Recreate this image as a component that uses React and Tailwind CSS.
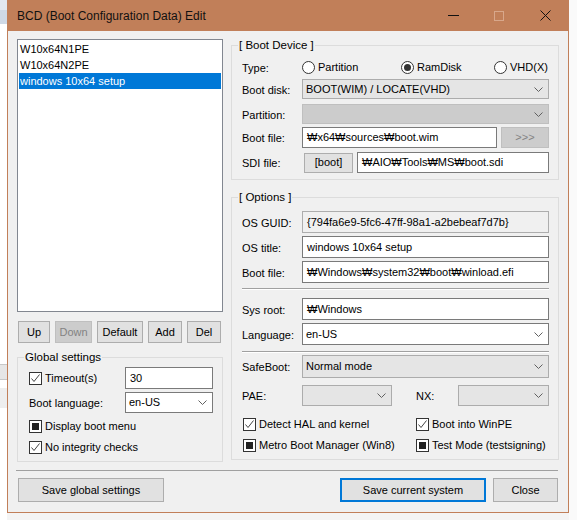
import React from "react";

const FONT = "font-['Liberation_Sans','Noto_Sans',sans-serif]";

function Chevron() {
  return (
    <svg width="9" height="5" viewBox="0 0 9 5" className="shrink-0">
      <path d="M0.5 0.5 L4.5 4.5 L8.5 0.5" fill="none" stroke="#606060" strokeWidth="1" />
    </svg>
  );
}

function Check({ state, label }) {
  return (
    <div className="flex items-center gap-[3px] whitespace-nowrap">
      <div className="w-[13px] h-[13px] border border-[#333] bg-white flex items-center justify-center shrink-0">
        {state === "on" && (
          <svg width="11" height="11" viewBox="0 0 11 11">
            <path d="M1.5 5.5 L4 8.5 L9.5 1.5" fill="none" stroke="#444" strokeWidth="1" />
          </svg>
        )}
        {state === "mixed" && <div className="w-[7px] h-[7px] bg-[#222]" />}
      </div>
      <span>{label}</span>
    </div>
  );
}

function Radio({ on, label, w }) {
  return (
    <div className={`flex items-center gap-[3px] whitespace-nowrap ${w}`}>
      <div className="w-[13px] h-[13px] rounded-full border border-[#333] bg-white flex items-center justify-center shrink-0">
        {on && <div className="w-[7px] h-[7px] rounded-full bg-[#333]" />}
      </div>
      <span>{label}</span>
    </div>
  );
}

function Select({ value, kind = "gray", className = "" }) {
  const look =
    kind === "white"
      ? "bg-white border-[#7a7a7a]"
      : kind === "off"
      ? "bg-[#cccccc] border-[#bfbfbf]"
      : "bg-[#e5e5e5] border-[#acacac]";
  return (
    <div className={`flex items-center justify-between border pl-[3px] pr-[5px] ${look} ${className}`}>
      <span className="whitespace-nowrap">{value}</span>
      <Chevron />
    </div>
  );
}

function Field({ value, className = "", ro }) {
  return (
    <div
      className={`flex items-center border pl-[4px] whitespace-nowrap ${
        ro ? "bg-[#f0f0f0] border-[#adadad]" : "bg-white border-[#7a7a7a]"
      } ${className}`}
    >
      {value}
    </div>
  );
}

function Btn({ children, className = "", off, focus }) {
  return (
    <div
      className={`flex items-center justify-center ${
        off
          ? "bg-[#cccccc] border border-[#bfbfbf] text-[#838383]"
          : focus
          ? "bg-[#e1e1e1] border-2 border-[#0078d7]"
          : "bg-[#e1e1e1] border border-[#adadad]"
      } ${className}`}
    >
      {children}
    </div>
  );
}

function Row({ label, children, className = "" }) {
  return (
    <div className={`flex items-center ${className}`}>
      <div className="w-[70px] pl-[10px] pt-[2px] whitespace-nowrap">{label}</div>
      {children}
    </div>
  );
}

function Group({ title, className = "", children }) {
  return (
    <fieldset className={`border border-[#dcdcdc] ${className}`}>
      <legend className="ml-[6px] px-[1px] h-[14px] leading-[14px] text-[11.5px]">{title}</legend>
      {children}
    </fieldset>
  );
}

export default function App() {
  return (
    <div className={`w-[577px] h-[520px] bg-white flex overflow-hidden text-[11px] text-black ${FONT}`}>
      {/* window behind */}
      <div className="w-[7px] flex flex-col bg-white">
        <div className="h-[10px] bg-[#e3e8ef]" />
        <div className="h-[14px] bg-[#cfd9e6]" />
        <div className="h-[340px]" />
        <div className="h-[16px] bg-[#e6e6e6] border-y border-[#c8c8c8]" />
        <div className="h-[8px]" />
        <div className="h-[20px] bg-[#eeeeee]" />
      </div>

      <div className="flex flex-col">
        <div className="w-[562px] h-[513px] bg-[#c17f59] flex flex-col px-px pb-px">
          {/* title bar */}
          <div className="h-[31px] flex items-center shrink-0">
            <div className="pl-[9px] flex-1 text-[12px] text-[#111]">BCD (Boot Configuration Data) Edit</div>
            <div className="w-[46px] h-full flex items-center justify-center">
              <div className="w-[11px] h-px bg-[#111]" />
            </div>
            <div className="w-[46px] h-full flex items-center justify-center">
              <div className="w-[10px] h-[10px] border border-[#d8a78b]" />
            </div>
            <div className="w-[46px] h-full flex items-center justify-center">
              <svg width="11" height="11" viewBox="0 0 11 11">
                <path d="M0.5 0.5 L10.5 10.5 M10.5 0.5 L0.5 10.5" stroke="#111" strokeWidth="1" />
              </svg>
            </div>
          </div>

          {/* body */}
          <div className="flex-1 bg-[#f0f0f0] flex flex-col">
            <div className="h-[431px] flex pl-[9px] gap-[8px]">
              {/* left column */}
              <div className="w-[206px] pt-[8px] flex flex-col">
                <div className="h-[273px] border border-[#828790] bg-white p-px">
                  <div className="h-[16px] pl-px flex items-center">W10x64N1PE</div>
                  <div className="h-[16px] pl-px flex items-center">W10x64N2PE</div>
                  <div className="h-[16px] pl-px flex items-center bg-[#0078d7] text-white">windows 10x64 setup</div>
                </div>
                <div className="mt-[9px] h-[22px] flex gap-[5px] pl-px">
                  <Btn className="w-[32px]">Up</Btn>
                  <Btn off className="w-[37px]">Down</Btn>
                  <Btn className="w-[46px]">Default</Btn>
                  <Btn className="w-[34px]">Add</Btn>
                  <Btn className="w-[34px]">Del</Btn>
                </div>
                <Group title="Global settings" className="mt-[7px] pb-[6px]">
                  <div className="mt-[3px] h-[22px] flex items-center">
                    <div className="w-[107px] pl-[11px]">
                      <Check state="on" label="Timeout(s)" />
                    </div>
                    <Field value="30" className="w-[88px] h-full" />
                  </div>
                  <div className="mt-[3px] h-[21px] flex items-center">
                    <div className="w-[107px] pl-[11px] pt-[2px]">Boot language:</div>
                    <Select value="en-US" kind="white" className="w-[88px] h-full" />
                  </div>
                  <div className="mt-[5px] h-[16px] flex items-center pl-[11px]">
                    <Check state="mixed" label="Display boot menu" />
                  </div>
                  <div className="mt-[5px] h-[16px] flex items-center pl-[11px]">
                    <Check state="on" label="No integrity checks" />
                  </div>
                </Group>
              </div>

              {/* right column */}
              <div className="w-[328px] pt-[7px] flex flex-col">
                <Group title="[ Boot Device ]" className="pb-[6px]">
                  <Row label="Type:" className="mt-[7px] h-[16px]">
                    <Radio label="Partition" w="w-[99px]" />
                    <Radio on label="RamDisk" w="w-[93px]" />
                    <Radio label="VHD(X)" w="" />
                  </Row>
                  <Row label="Boot disk:" className="mt-[4px] h-[20px]">
                    <Select value="BOOT(WIM) / LOCATE(VHD)" className="w-[247px] h-full" />
                  </Row>
                  <Row label="Partition:" className="mt-[5px] h-[20px]">
                    <Select value="" kind="off" className="w-[247px] h-full" />
                  </Row>
                  <Row label="Boot file:" className="mt-[3px] h-[21px]">
                    <Field value="₩x64₩sources₩boot.wim" className="w-[195px] h-full" />
                    <Btn off className="ml-[4px] w-[48px] h-full">&gt;&gt;&gt;</Btn>
                  </Row>
                  <Row label="SDI file:" className="mt-[4px] h-[21px]">
                    <Btn className="ml-[2px] w-[49px] h-[20px]">[boot]</Btn>
                    <Field value="₩AIO₩Tools₩MS₩boot.sdi" className="ml-[4px] w-[192px] h-full" />
                  </Row>
                </Group>

                <Group title="[ Options ]" className="mt-[10px] pb-[6px]">
                  <Row label="OS GUID:" className="mt-[7px] h-[22px]">
                    <Field ro value="{794fa6e9-5fc6-47ff-98a1-a2bebeaf7d7b}" className="w-[247px] h-full" />
                  </Row>
                  <Row label="OS title:" className="mt-[3px] h-[22px]">
                    <Field value="windows 10x64 setup" className="w-[247px] h-full" />
                  </Row>
                  <Row label="Boot file:" className="mt-[3px] h-[22px]">
                    <Field value="₩Windows₩system32₩boot₩winload.efi" className="w-[247px] h-full" />
                  </Row>
                  <div className="mt-[5px] ml-[10px] w-[307px] border-t border-[#a0a0a0] border-b border-b-white" />
                  <Row label="Sys root:" className="mt-[8px] h-[22px]">
                    <Field value="₩Windows" className="w-[247px] h-full" />
                  </Row>
                  <Row label="Language:" className="mt-[3px] h-[22px]">
                    <Select value="en-US" kind="white" className="w-[247px] h-full" />
                  </Row>
                  <div className="mt-[6px] ml-[10px] w-[307px] border-t border-[#a0a0a0] border-b border-b-white" />
                  <Row label="SafeBoot:" className="mt-[2px] h-[23px]">
                    <Select value="Normal mode" className="w-[247px] h-full" />
                  </Row>
                  <Row label="PAE:" className="mt-[7px] h-[21px]">
                    <Select value="" className="w-[90px] h-full" />
                    <div className="w-[66px] pl-[24px] pt-[2px]">NX:</div>
                    <Select value="" className="w-[91px] h-full" />
                  </Row>
                  <div className="mt-[10px] h-[16px] flex items-center pl-[11px]">
                    <div className="w-[173px]">
                      <Check state="on" label="Detect HAL and kernel" />
                    </div>
                    <Check state="on" label="Boot into WinPE" />
                  </div>
                  <div className="mt-[5px] h-[16px] flex items-center pl-[11px]">
                    <div className="w-[173px]">
                      <Check state="mixed" label="Metro Boot Manager (Win8)" />
                    </div>
                    <Check state="mixed" label="Test Mode (testsigning)" />
                  </div>
                </Group>
              </div>
            </div>

            <div className="mt-[8px] ml-[8px] w-[542px] h-px bg-[#a0a0a0]" />
            <div className="mt-[7px] h-[24px] flex pl-[10px]">
              <Btn className="w-[146px]">Save global settings</Btn>
              <div className="flex-1" />
              <Btn focus className="w-[146px]">Save current system</Btn>
              <Btn className="ml-[7px] w-[65px]">Close</Btn>
              <div className="w-[10px]" />
            </div>
          </div>
        </div>
        <div className="h-[7px] bg-[#f4f4f4]" />
      </div>
      <div className="flex-1 bg-[#fafafa]" />
    </div>
  );
}
